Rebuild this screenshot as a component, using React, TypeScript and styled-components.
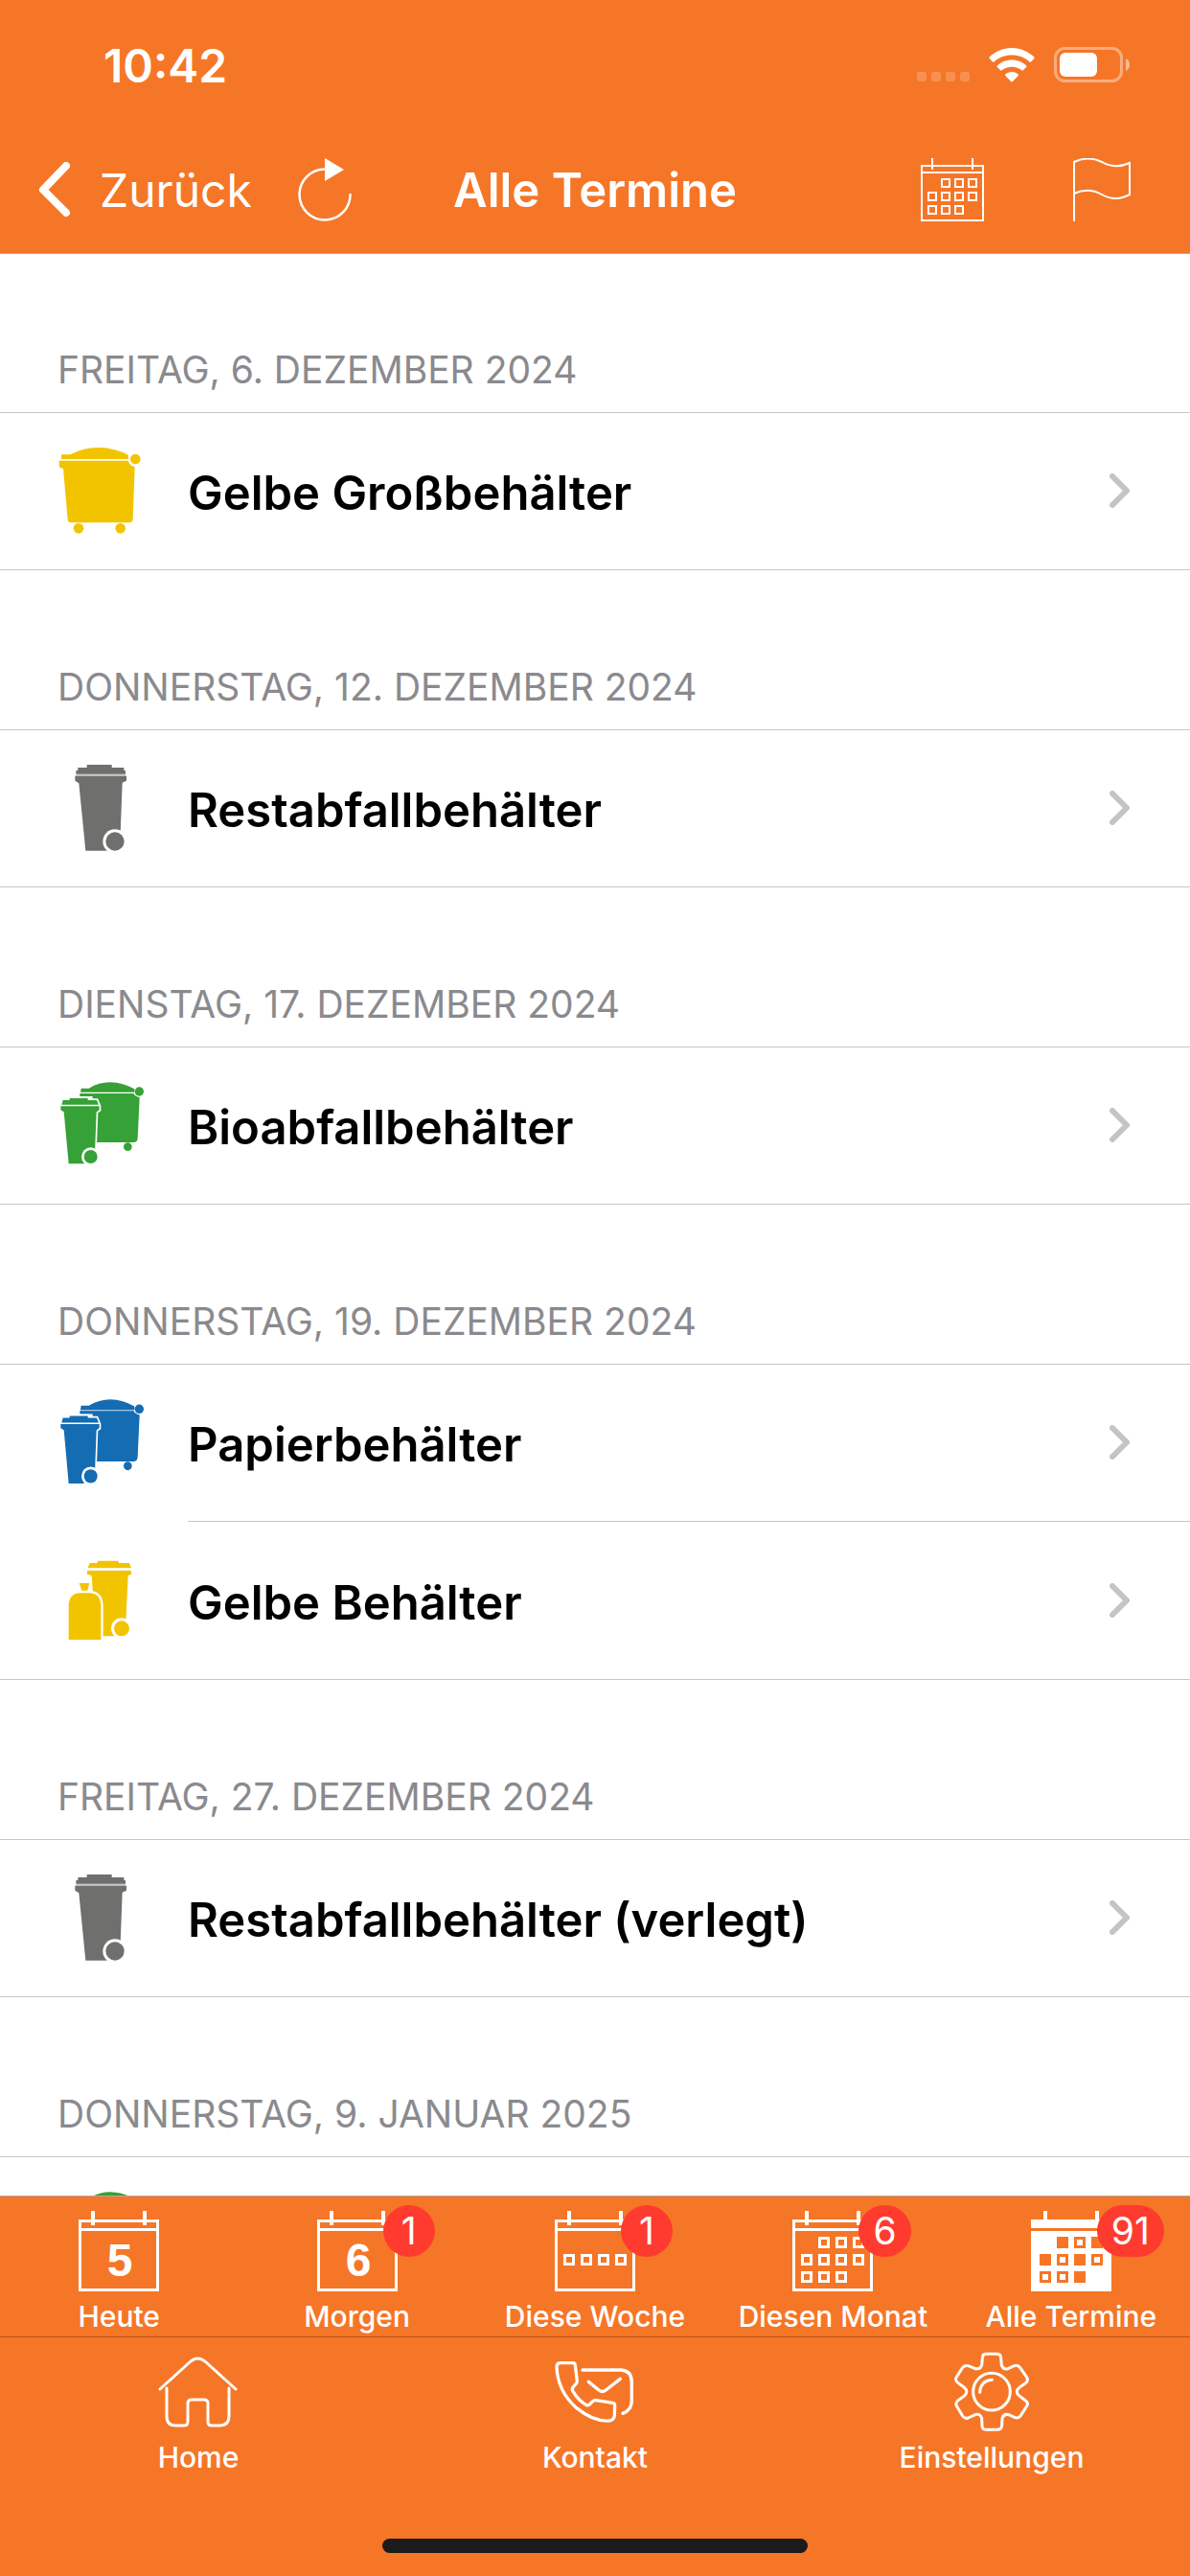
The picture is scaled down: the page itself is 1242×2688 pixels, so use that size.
import React from "react";
import styled, { createGlobalStyle } from "styled-components";

const ORANGE = "#f67627";
const LINE = "#c6c6c8";
const GREEN = "#36a136";
const YELLOW = "#f2c400";
const BLUE = "#146cb3";
const GREY = "#6f6f6e";

const GlobalStyle = createGlobalStyle`
  *, *::before, *::after { box-sizing: border-box; }
  body {
    margin: 0;
    background: #fff;
    font-family: Inter, "Liberation Sans", sans-serif;
    -webkit-font-smoothing: antialiased;
  }
  h1, h2, ul { margin: 0; padding: 0; font-weight: inherit; }
  ul { list-style: none; }
  a { color: inherit; text-decoration: none; }
  button { border: 0; padding: 0; background: none; color: inherit; font: inherit; }
  svg { display: block; flex: none; }
`;

const Screen = styled.div`
  display: flex;
  flex-direction: column;
  height: 100vh;
  overflow: hidden;
`;

const Header = styled.header`
  flex: none;
  background: ${ORANGE};
  color: #fff;
  box-shadow: 0 1px 0 #a9a9ab;
  z-index: 1;
`;

const StatusBar = styled.div`
  display: flex;
  align-items: center;
  justify-content: space-between;
  height: 132px;
  padding: 4px 63px 0 108px;
`;

const Clock = styled.time`
  font-size: 48px;
  font-weight: 600;
`;

const StatusIcons = styled.div`
  display: flex;
  align-items: center;
  gap: 20px;
`;

const NavBar = styled.nav`
  display: grid;
  grid-template-columns: 1fr auto 1fr;
  align-items: center;
  height: 132px;
  padding: 0 40px;
`;

const NavLeft = styled.div`
  display: flex;
  align-items: center;
  gap: 48px;
`;

const NavRight = styled.div`
  display: flex;
  align-items: center;
  justify-content: flex-end;
  gap: 93px;
  padding-right: 22px;
`;

const BackButton = styled.button`
  display: flex;
  align-items: center;
  gap: 30px;
  font-size: 48px;
`;

const Title = styled.h1`
  font-size: 49px;
  font-weight: 600;
`;

const List = styled.main`
  flex: 1;
  min-height: 0;
  overflow-y: auto;
  scrollbar-width: none;
`;

const DayHeading = styled.h2`
  display: flex;
  align-items: flex-end;
  height: 166px;
  padding: 0 60px 20px;
  color: #8a8a8e;
  font-size: 39px;
  line-height: 48px;
  text-transform: uppercase;
`;

const Group = styled.ul`
  box-shadow: inset 0 1px 0 ${LINE};
  border-bottom: 1px solid ${LINE};
`;

const Row = styled.a`
  display: flex;
  height: 164px;
  padding-left: 60px;
  align-items: center;
`;

const RowBody = styled.div`
  display: flex;
  flex: 1;
  align-items: center;
  justify-content: space-between;
  align-self: stretch;
  margin-left: 46px;
  padding-right: 62px;
`;

const Item = styled.li`
  & + & ${RowBody} {
    box-shadow: 0 -1px 0 ${LINE};
  }
  & + & {
    padding-top: 1px;
  }
`;

const RowTitle = styled.span`
  padding-top: 5px;
  font-size: 49px;
  font-weight: 600;
`;

const Footer = styled.footer`
  flex: none;
  background: ${ORANGE};
  color: #fff;
  box-shadow: 0 -1px 0 #b0a9a4;
  z-index: 1;
`;

const TabBar = styled.nav<{ $divider?: boolean }>`
  display: grid;
  grid-auto-flow: column;
  grid-auto-columns: minmax(0, 1fr);
  border-bottom: ${(p) => (p.$divider ? "1px solid #b3561c" : "0")};
`;

const Tab = styled.button`
  display: flex;
  flex-direction: column;
  align-items: center;
  gap: 8px;
  height: 146px;
  padding-top: 15px;
  font-size: 30px;
  font-weight: 500;
  line-height: 36px;
  white-space: nowrap;
`;

const TabIcon = styled.span`
  position: relative;
`;

const Badge = styled.span`
  position: absolute;
  top: -6px;
  left: 69px;
  min-width: 54px;
  height: 54px;
  padding: 0 15px;
  border-radius: 27px;
  background: #ff3b30;
  font-size: 39px;
  font-weight: 400;
  line-height: 54px;
  text-align: center;
`;

const HomeArea = styled.div`
  display: flex;
  justify-content: center;
  align-items: flex-end;
  height: 103px;
  padding-bottom: 24px;
`;

const HomeIndicator = styled.div`
  width: 444px;
  height: 15px;
  border-radius: 8px;
  background: #1b1b1b;
`;

/* ---------- waste container drawings ---------- */

type BinKind = "container" | "bin" | "pair" | "pairTall" | "bag";

function BinIcon({ kind, color }: { kind: BinKind; color: string }) {
  return (
    <svg width="90" height="90" viewBox="0 0 270 270" fill={color} aria-hidden="true">
      {kind === "container" && (
        <>
          <path d="M12 22H40Q82 0 128 0Q182 1 222 24V36H12Z" />
          <path d="M5 41H221Q227 58 242 60L236 225Q235 235 225 235H43Q33 235 32 225L18 66Q6 64 5 57Z" />
          <circle cx="244" cy="36" r="16" />
          <circle cx="66" cy="253" r="16" />
          <circle cx="197" cy="253" r="16" />
        </>
      )}
      {kind === "bin" && (
        <>
          <path d="M92 0H170V9H208V17L213 19V29H58V19L64 17V9H92Z" />
          <path d="M58 29H213V35H58Z" opacity="0.4" />
          <path d="M55 35H216V50L203 56L195 269H88L67 58L55 50Z" />
          <circle cx="180" cy="240" r="38" fill="#fff" />
          <circle cx="180" cy="240" r="29" />
        </>
      )}
      {(kind === "pair" || kind === "pairTall") && (
        <g transform={kind === "pairTall" ? "scale(1 1.03)" : undefined}>
          <path d="M74 20H98Q130 1 165 1Q205 2 241 22V32H72Z" />
          {kind === "pairTall" && <path d="M72 31H240V37H72Z" opacity="0.4" />}
          <path d="M70 36H238Q244 46 257 48L251 176Q250 189 238 189H123V93H110V45H70Z" />
          <circle cx="256" cy="30" r="14" />
          <circle cx="220" cy="203" r="13" />
          <path
            d="M38 51H95V57H123L129 71L131 76V88L122 94L116 250L82 256H35L20 94L10 88V76L13 71L17 57H38Z"
            fill="#fff"
            stroke="#fff"
            strokeWidth="10"
          />
          <path d="M38 51H95V57H123L129 71H13L17 57H38Z" />
          <path d="M10 76H131V88L122 94L116 250L82 256H35L20 94L10 88Z" />
          <circle cx="104" cy="234" r="29" fill="#fff" />
          <circle cx="104" cy="234" r="21" />
        </g>
      )}
      {kind === "bag" && (
        <>
          <path d="M125 11H191V18H225L231 33H95L101 18H125Z" />
          <path d="M95 33H231V42H95Z" opacity="0.12" />
          <path d="M93 42H231V53L221 57L212 247H120L107 57L93 53Z" />
          <circle cx="201" cy="223" r="33" fill="#fff" />
          <circle cx="201" cy="223" r="24" />
          <path
            d="M35 258V150Q37 112 72 112H100Q134 112 136 150V258ZM68 81H100L94 104H76Z"
            fill="#fff"
            stroke="#fff"
            strokeWidth="14"
          />
          <path d="M35 258V150Q37 112 72 112H100Q134 112 136 150V258Z" />
          <path d="M68 81H100L94 104H76Z" />
        </>
      )}
    </svg>
  );
}

/* ---------- calendar drawings ---------- */

const MONTH_CELLS: [number, number][] = [
  [1, 0], [2, 0], [3, 0],
  [0, 1], [1, 1], [2, 1], [3, 1],
  [0, 2], [1, 2], [2, 2],
];
const WEEK_CELLS: [number, number][] = [[0, 1], [1, 1], [2, 1], [3, 1]];
const BOOKED = ["1,0", "3,0", "0,1", "2,1", "2,2"];

function CalendarIcon({ cells = [], day }: { cells?: [number, number][]; day?: string }) {
  return (
    <svg width="84" height="84" viewBox="0 0 84 84" fill="#fff" aria-hidden="true">
      <path fillRule="evenodd" d="M0 9H84V84H0ZM3 12V18H81V12ZM3 21V81H81V21Z" />
      <path d="M13 0H17V15H13ZM67 0H71V15H67Z" />
      {cells.map(([c, r]) => (
        <path
          key={`${c}-${r}`}
          fillRule="evenodd"
          d={`M${9 + c * 18} ${27 + r * 18}h12v12h-12zm3 3v6h6v-6z`}
        />
      ))}
      {day && (
        <text
          x="43"
          y="68"
          textAnchor="middle"
          fontFamily='"Liberation Sans", sans-serif'
          fontSize="48"
          fontWeight="700"
        >
          {day}
        </text>
      )}
    </svg>
  );
}

function CalendarFilledIcon() {
  return (
    <svg width="84" height="84" viewBox="0 0 84 84" aria-hidden="true">
      <path fill="#fff" d="M0 9H84V18H0ZM0 21H84V84H0ZM13 0H17V10H13ZM67 0H71V10H67Z" />
      {MONTH_CELLS.map(([c, r]) => (
        <path
          key={`${c}-${r}`}
          fill={ORANGE}
          fillRule="evenodd"
          d={
            `M${9 + c * 18} ${27 + r * 18}h12v12h-12z` +
            (BOOKED.includes(`${c},${r}`) ? "" : "m3 3v6h6v-6z")
          }
        />
      ))}
    </svg>
  );
}

function CalendarNavIcon() {
  return (
    <svg width="66" height="66" viewBox="0 0 66 66" fill="#fff" aria-hidden="true">
      <path fillRule="evenodd" d="M0 7H66V66H0ZM2 9V14H64V9ZM2 16V64H64V16Z" />
      <path d="M11 0H13V12H11ZM53 0H55V12H53Z" />
      {MONTH_CELLS.map(([c, r]) => (
        <path
          key={`${c}-${r}`}
          fillRule="evenodd"
          d={`M${7 + c * 14} ${21 + r * 14}h10v10h-10zm2 2v6h6v-6z`}
        />
      ))}
    </svg>
  );
}

/* ---------- line drawings ---------- */

function HomeIcon() {
  return (
    <svg width="84" height="84" viewBox="0 0 84 84" fill="none" stroke="#fff" strokeWidth="3" strokeLinecap="round" strokeLinejoin="round" aria-hidden="true">
      <path d="M2 39L34 10Q41 4 49 10L81 39" />
      <path d="M9 38V67Q9 77 18 77H27Q31 77 31 73V54Q31 50 35 50H48Q52 50 52 54V73Q52 77 56 77H64Q74 77 74 67V38" />
    </svg>
  );
}

function ContactIcon() {
  return (
    <svg width="84" height="84" viewBox="27 12 252 252" fill="none" stroke="#fff" strokeWidth="10" strokeLinecap="round" strokeLinejoin="round" aria-hidden="true">
      <path d="M44 47H84Q90 47 91 54L97 104Q97 109 93 113L84 123Q80 129 84 136Q102 165 126 179Q131 181 136 177L146 167Q150 163 156 164L208 172Q215 173 215 180L214 212Q213 226 198 228Q150 232 95 188Q36 135 33 60Q33 47 44 47Z" />
      <path d="M114 69H235Q268 71 268 108V165Q268 195 240 205" />
      <path d="M133 106L165 132Q176 141 187 132L232 97" />
    </svg>
  );
}

function SettingsIcon() {
  return (
    <svg width="84" height="84" viewBox="9 24 252 252" fill="none" stroke="#fff" strokeWidth="9" strokeLinecap="round" strokeLinejoin="round" aria-hidden="true">
      <path d="M118 31H151Q163 31 164 43L166 66Q172 82 186 77L206 68Q217 64 224 74L245 104Q251 115 241 122L223 135Q205 149 223 163L241 177Q251 183 245 194L226 224Q219 234 208 230L188 221Q173 217 168 232L167 256Q165 268 153 268H118Q106 268 105 256L104 232Q99 216 84 221L62 231Q51 235 44 225L26 195Q20 185 29 177L48 163Q65 149 48 135L29 121Q19 113 25 103L43 75Q50 65 61 68L84 77Q99 80 104 66L106 43Q107 31 118 31Z" />
      <circle cx="135" cy="149" r="58" />
      <path d="M98 151Q101 114 136 112" />
    </svg>
  );
}

function BackChevron() {
  return (
    <svg width="34" height="58" viewBox="0 0 34 58" fill="none" stroke="#fff" strokeWidth="8" strokeLinecap="round" strokeLinejoin="round" aria-hidden="true">
      <path d="M29 4L5 29L29 53" />
    </svg>
  );
}

function RefreshIcon() {
  return (
    <svg width="56" height="66" viewBox="0 0 56 66" aria-hidden="true">
      <path d="M28 11.500A26.500 26.500 0 1 0 54.500 37" fill="none" stroke="#fff" strokeWidth="2.500" />
      <path d="M28 0L48 12L28 24Z" fill="#fff" />
    </svg>
  );
}

function FlagIcon() {
  return (
    <svg width="60" height="66" viewBox="0 0 60 66" fill="none" stroke="#fff" strokeWidth="2" aria-hidden="true">
      <path d="M1 66V4Q16 -3 30 4Q44 12 59 5V38Q44 46 30 38Q16 30 1 37" />
    </svg>
  );
}

function RowChevron() {
  return (
    <svg width="22" height="36" viewBox="0 0 22 36" fill="none" stroke="#c4c4c6" strokeWidth="6" strokeLinecap="round" strokeLinejoin="round" aria-hidden="true">
      <path d="M3 3L18 18L3 33" />
    </svg>
  );
}

function NoSignalIcon() {
  return (
    <svg width="55" height="38" viewBox="0 0 55 38" fill="#fff" opacity="0.2" aria-hidden="true">
      {[0, 15, 30, 45].map((x) => (
        <rect key={x} x={x} y="26" width="10" height="10" rx="3" />
      ))}
    </svg>
  );
}

function WifiIcon() {
  return (
    <svg width="48" height="38" viewBox="0 0 48 38" fill="#fff" aria-hidden="true">
      <path d="M24 1C14.500 1 6.500 5 .6 10.400Q0 11.200 .6 12L4 15.400Q4.700 16 5.500 15.400C10.500 11 17 8.500 24 8.500S37.500 11 42.500 15.400Q43.300 16 44 15.400L47.400 12Q48 11.200 47.400 10.400C41.500 5 33.500 1 24 1Z" />
      <path d="M24 13.500C18 13.500 12.600 15.700 8.800 19.500Q8.300 20.200 8.800 21L12.200 24.300Q13 25 13.700 24.300C16.500 22 20 20.800 24 20.800S31.500 22 34.300 24.300Q35 25 35.800 24.300L39.200 21Q39.700 20.200 39.200 19.500C35.400 15.700 30 13.500 24 13.500Z" />
      <path d="M24 26C21.300 26 19 27 17.300 28.500Q16.700 29.200 17.300 30L23.300 36.200Q24 36.900 24.700 36.200L30.700 30Q31.300 29.200 30.700 28.500C29 27 26.700 26 24 26Z" />
    </svg>
  );
}

function BatteryIcon() {
  return (
    <svg width="79" height="38" viewBox="0 0 79 38" aria-hidden="true">
      <rect x="1.500" y="1.500" width="69" height="34" rx="10" fill="none" stroke="#fff" strokeOpacity="0.4" strokeWidth="3" />
      <rect x="6" y="6" width="39" height="25" rx="6" fill="#fff" />
      <path d="M75 12Q79 14 79 18.500T75 25Z" fill="#fff" opacity="0.5" />
    </svg>
  );
}

/* ---------- data ---------- */

interface Pickup {
  title: string;
  kind: BinKind;
  color: string;
}

const DAYS: { date: string; pickups: Pickup[] }[] = [
  { date: "Freitag, 6. Dezember 2024", pickups: [{ title: "Gelbe Großbehälter", kind: "container", color: YELLOW }] },
  { date: "Donnerstag, 12. Dezember 2024", pickups: [{ title: "Restabfallbehälter", kind: "bin", color: GREY }] },
  { date: "Dienstag, 17. Dezember 2024", pickups: [{ title: "Bioabfallbehälter", kind: "pair", color: GREEN }] },
  {
    date: "Donnerstag, 19. Dezember 2024",
    pickups: [
      { title: "Papierbehälter", kind: "pairTall", color: BLUE },
      { title: "Gelbe Behälter", kind: "bag", color: YELLOW },
    ],
  },
  { date: "Freitag, 27. Dezember 2024", pickups: [{ title: "Restabfallbehälter (verlegt)", kind: "bin", color: GREY }] },
  { date: "Donnerstag, 9. Januar 2025", pickups: [{ title: "Bioabfallbehälter", kind: "pair", color: GREEN }] },
];

const RANGE_TABS = [
  { label: "Heute", icon: <CalendarIcon day="5" /> },
  { label: "Morgen", icon: <CalendarIcon day="6" />, badge: 1 },
  { label: "Diese Woche", icon: <CalendarIcon cells={WEEK_CELLS} />, badge: 1 },
  { label: "Diesen Monat", icon: <CalendarIcon cells={MONTH_CELLS} />, badge: 6 },
  { label: "Alle Termine", icon: <CalendarFilledIcon />, badge: 91 },
];

const MAIN_TABS = [
  { label: "Home", icon: <HomeIcon /> },
  { label: "Kontakt", icon: <ContactIcon /> },
  { label: "Einstellungen", icon: <SettingsIcon /> },
];

export default function App() {
  return (
    <Screen>
      <GlobalStyle />
      <Header>
        <StatusBar>
          <Clock>10:42</Clock>
          <StatusIcons>
            <NoSignalIcon />
            <WifiIcon />
            <BatteryIcon />
          </StatusIcons>
        </StatusBar>
        <NavBar>
          <NavLeft>
            <BackButton type="button">
              <BackChevron />
              Zurück
            </BackButton>
            <button type="button" aria-label="Aktualisieren">
              <RefreshIcon />
            </button>
          </NavLeft>
          <Title>Alle Termine</Title>
          <NavRight>
            <button type="button" aria-label="Kalender">
              <CalendarNavIcon />
            </button>
            <button type="button" aria-label="Markieren">
              <FlagIcon />
            </button>
          </NavRight>
        </NavBar>
      </Header>

      <List>
        {DAYS.map((day) => (
          <section key={day.date}>
            <DayHeading>{day.date}</DayHeading>
            <Group>
              {day.pickups.map((p) => (
                <Item key={p.title}>
                  <Row href="#">
                    <BinIcon kind={p.kind} color={p.color} />
                    <RowBody>
                      <RowTitle>{p.title}</RowTitle>
                      <RowChevron />
                    </RowBody>
                  </Row>
                </Item>
              ))}
            </Group>
          </section>
        ))}
      </List>

      <Footer>
        <TabBar $divider aria-label="Zeitraum">
          {RANGE_TABS.map((t) => (
            <Tab key={t.label} type="button">
              <TabIcon>
                {t.icon}
                {t.badge && <Badge>{t.badge}</Badge>}
              </TabIcon>
              {t.label}
            </Tab>
          ))}
        </TabBar>
        <TabBar aria-label="Hauptnavigation">
          {MAIN_TABS.map((t) => (
            <Tab key={t.label} type="button">
              <TabIcon>{t.icon}</TabIcon>
              {t.label}
            </Tab>
          ))}
        </TabBar>
        <HomeArea>
          <HomeIndicator />
        </HomeArea>
      </Footer>
    </Screen>
  );
}
